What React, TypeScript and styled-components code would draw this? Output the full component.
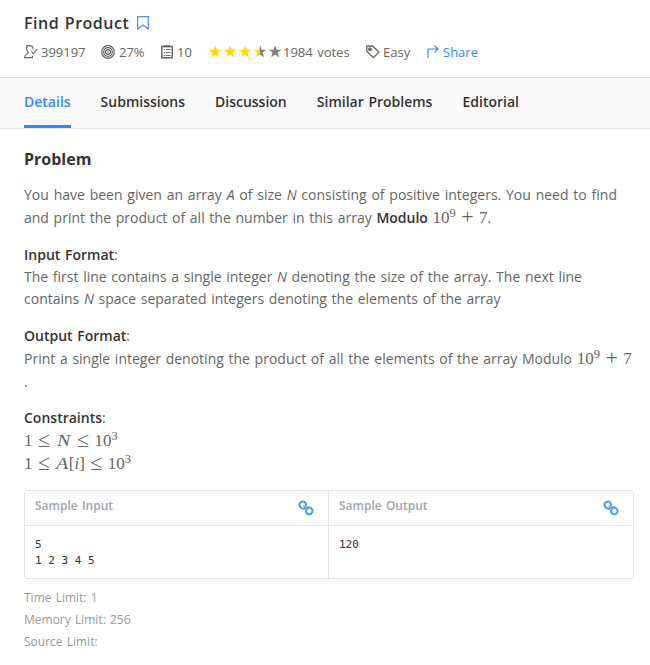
import React from "react";
import styled, { createGlobalStyle } from "styled-components";

const Global = createGlobalStyle`
  *, *::before, *::after { box-sizing: border-box; }
  html, body { margin: 0; background: #fff; overflow: hidden; }
  body { font-family: "Open Sans", "Noto Sans", sans-serif; font-size: 14px; color: #666; word-spacing: 1.04px; }
`;

const Page = styled.div`
  width: 650px;
  height: 665px;
  overflow: hidden;
`;

const Header = styled.header`
  height: 78px;
  padding: 12px 24px 0;
  border-bottom: 1px solid #dadfea;
`;

const TitleRow = styled.div`
  display: flex;
  align-items: center;
  height: 22px;
  gap: 8px;
`;

const Title = styled.h1`
  margin: 0;
  font-size: 16px;
  font-weight: 600;
  line-height: 22px;
  letter-spacing: 0.5px;
  color: #333;
`;

const Stats = styled.div`
  display: flex;
  align-items: center;
  height: 20px;
  margin-top: 8px;
  font-size: 13px;
  line-height: 20px;
`;

const Stat = styled.span<{ $width: number; $blue?: boolean; $gap?: number }>`
  display: flex;
  flex: none;
  align-items: center;
  gap: ${(p) => p.$gap ?? 3}px;
  width: ${(p) => p.$width}px;
  white-space: nowrap;
  color: ${(p) => (p.$blue ? "#3b82fc" : "#666")};
  svg { flex: none; }
`;

const Tabs = styled.nav`
  display: flex;
  gap: 30px;
  height: 51px;
  padding: 0 24px;
  background: #fafafa;
  border-bottom: 1px solid #dadfea;
`;

const Tab = styled.a<{ $active?: boolean }>`
  height: 50px;
  line-height: 48px;
  font-weight: 600;
  white-space: nowrap;
  color: ${(p) => (p.$active ? "#3b88fd" : "#333")};
  border-bottom: 3px solid ${(p) => (p.$active ? "#2f87ff" : "transparent")};
`;

const Main = styled.main`
  padding: 19px 16px 0 24px;
`;

const Heading = styled.h2`
  margin: 0 0 14px;
  font-size: 16px;
  font-weight: 700;
  line-height: 22px;
  color: #333;
`;

const Block = styled.section<{ $after: number }>`
  margin-bottom: ${(p) => p.$after}px;
`;

const Line = styled.div<{ $h?: number; $words?: number }>`
  height: ${(p) => p.$h ?? 22}px;
  line-height: 22px;
  white-space: nowrap;
  word-spacing: ${(p) => p.$words ?? 1.04}px;
`;

const Strong = styled.strong`
  font-weight: 600;
  color: #333;
`;

const MathText = styled.span`
  font-family: "Liberation Serif", serif;
  font-size: 17px;
  line-height: 1;
  sup {
    font-size: 12.5px;
    line-height: 0;
    vertical-align: 6px;
  }
`;

const Op = styled.span<{ $space: number }>`
  display: inline-block;
  margin: 0 ${(p) => p.$space}px;
  font-size: 22px;
  line-height: 10px;
  vertical-align: -1px;
`;

const Variable = styled.i<{ $stretch?: boolean; $left?: number; $right?: number }>`
  display: inline-block;
  line-height: 10px;
  transform: scaleX(${(p) => (p.$stretch ? 1.18 : 1)});
  margin: 0 ${(p) => p.$right ?? 0}px 0 ${(p) => p.$left ?? 0}px;
`;

const Samples = styled.div`
  display: grid;
  grid-template-columns: 303px 1fr;
  width: 610px;
  height: 89px;
  border: 1px solid #e3e4e6;
  border-radius: 3px;
`;

const Sample = styled.div`
  & + & { border-left: 1px solid #e3e4e6; }
`;

const SampleHead = styled.div`
  display: flex;
  justify-content: space-between;
  height: 35px;
  padding: 6px 14px 0 10px;
  border-bottom: 1px solid #e3e4e6;
  font-size: 12px;
  font-weight: 600;
  line-height: 18px;
  color: #a3a5a8;
  svg { margin-top: 3px; }
`;

const Code = styled.pre`
  margin: 0;
  padding: 11px 10px;
  font-family: "DejaVu Sans Mono", monospace;
  font-size: 11px;
  line-height: 16px;
  word-spacing: 0;
  color: #333;
`;

const Limits = styled.div`
  margin-top: 8px;
  font-size: 12px;
  line-height: 22px;
  color: #999;
`;

const STAR = "M7 0.2 8.7 5H13.8L9.7 8.1 11.2 13 7 10 2.8 13 4.3 8.1 0.2 5H5.3Z";

const Bookmark = () => (
  <svg width="12" height="14" viewBox="0 0 12 14" fill="none" stroke="#5a8dfb" strokeWidth="1.3">
    <path d="M.7.7H11.3V13L6 9 .7 13Z" />
  </svg>
);

const Submitted = () => (
  <svg width="14" height="14" viewBox="0 0 14 14" fill="none" stroke="#666" strokeWidth="1.2">
    <path d="M8.9 4.2C9.3 2 8 .7 6.2.7H2.2M3.6 1C2.2 2.2 2.3 4.3 3.4 5.8 4.6 7.6 4.4 8.6 2.6 9.2 1 9.8.6 10.8.6 12.7H8.4V10.8M7.3 6.3 9.3 8.7 13.3 4.2" />
  </svg>
);

const Target = () => (
  <svg width="14" height="14" viewBox="0 0 14 14" fill="none" stroke="#666" strokeWidth="1.25">
    <circle cx="7" cy="7" r="6.3" />
    <circle cx="7" cy="7" r="4.3" />
    <circle cx="7" cy="7" r="2.4" />
    <circle cx="7" cy="7" r=".8" fill="#666" stroke="none" />
  </svg>
);

const Clipboard = () => (
  <svg width="12" height="14" viewBox="0 0 12 14" fill="none" stroke="#666">
    <path strokeWidth="1.5" d="M.8 1.6H11.2V12.7H.8Z" />
    <path strokeWidth="2" d="M2.7 1.2H9.3" />
    <path d="M2.8 4.5H4M5 4.5H9.5M2.8 7.5H4M5 7.5H9.5M2.8 10.5H4M5 10.5H9.5" />
  </svg>
);

const Stars = () => (
  <svg width="74" height="14" viewBox="0 0 74 14">
    <defs>
      <linearGradient id="half">
        <stop offset=".5" stopColor="#ffd800" />
        <stop offset=".5" stopColor="#808080" />
      </linearGradient>
    </defs>
    {["#ffd800", "#ffd800", "#ffd800", "url(#half)", "#808080"].map((fill, i) => (
      <path key={i} d={STAR} fill={fill} transform={`translate(${i * 15 + 0.5} 0) scale(.94)`} />
    ))}
  </svg>
);

const Tag = () => (
  <svg width="14" height="14" viewBox="0 0 14 14" fill="none" stroke="#666" strokeWidth="1.3">
    <path d="M.8 1H6.6L13 7.2 7.4 12.7.8 6.3Z" />
    <circle cx="4" cy="4.3" r="1.3" fill="#888" />
  </svg>
);

const ShareIcon = () => (
  <svg width="12" height="14" viewBox="0 0 12 14" fill="none" stroke="#3b82fc" strokeWidth="1.2">
    <path d="M1 13V4H11M7.5.5 11 4 7.5 7.5" />
  </svg>
);

const Link = () => (
  <svg width="16" height="16" viewBox="0 0 16 16" fill="none" stroke="#4f9be3" strokeWidth="2">
    <path d="M7.4 8.1C5.9 9 3.6 8.7 2.4 7.2 1.1 5.5 1.3 3.5 2.7 2.3 4.2 1 6.5 1.4 7.5 3 8.2 4.1 8.1 5.3 7.3 6.6" />
    <path d="M8.5 8.5C10 7.2 12.2 7.2 13.6 8.8 14.8 10.2 14.7 12.3 13.3 13.6 11.8 14.8 9.6 14.4 8.5 12.9 7.8 11.9 7.8 10.6 8.5 9.4" />
    <path d="M5.6 6 9.8 10.2" strokeWidth="1.2" />
  </svg>
);

const Modulus = () => (
  <MathText>10<sup>9</sup><Op $space={5.4}>+</Op>7</MathText>
);

export default function App() {
  return (
    <Page>
      <Global />
      <Header>
        <TitleRow>
          <Title>Find Product</Title>
          <Bookmark />
        </TitleRow>
        <Stats>
          <Stat $width={77}><Submitted />399197</Stat>
          <Stat $width={60} $gap={4}><Target />27%</Stat>
          <Stat $width={47} $gap={4}><Clipboard />10</Stat>
          <Stat $width={158} $gap={1}><Stars />1984 votes</Stat>
          <Stat $width={61} $gap={3}><Tag />Easy</Stat>
          <Stat $width={60} $gap={4} $blue><ShareIcon />Share</Stat>
        </Stats>
      </Header>
      <Tabs>
        <Tab $active>Details</Tab>
        <Tab>Submissions</Tab>
        <Tab>Discussion</Tab>
        <Tab>Similar Problems</Tab>
        <Tab>Editorial</Tab>
      </Tabs>
      <Main>
        <Heading>Problem</Heading>
        <Block $after={15}>
          <Line $h={23} $words={1.16}>You have been given an array <i>A</i> of size <i>N</i> consisting of positive integers. You need to find</Line>
          <Line>and print the product of all the number in this array <Strong>Modulo</Strong> <Modulus />.</Line>
        </Block>
        <Block $after={15}>
          <Line><Strong>Input Format</Strong>:</Line>
          <Line>The first line contains a single integer <i>N</i> denoting the size of the array. The next line</Line>
          <Line>contains <i>N</i> space separated integers denoting the elements of the array</Line>
        </Block>
        <Block $after={14}>
          <Line $h={23}><Strong>Output Format</Strong>:</Line>
          <Line $h={23}>Print a single integer denoting the product of all the elements of the array Modulo <Modulus /></Line>
          <Line>.</Line>
        </Block>
        <Block $after={15}>
          <Line $h={23}><Strong>Constraints</Strong>:</Line>
          <Line $h={23}><MathText>1<Op $space={5.4}>≤</Op><Variable $stretch $left={2.5} $right={2.5}>N</Variable><Op $space={5.4}>≤</Op>10<sup>3</sup></MathText></Line>
          <Line><MathText>1<Op $space={5.4}>≤</Op><Variable $stretch $left={2} $right={1}>A</Variable>[<Variable>i</Variable>]<Op $space={5.4}>≤</Op>10<sup>3</sup></MathText></Line>
        </Block>
        <Samples>
          <Sample>
            <SampleHead>Sample Input<Link /></SampleHead>
            <Code>{"5\n1 2 3 4 5"}</Code>
          </Sample>
          <Sample>
            <SampleHead>Sample Output<Link /></SampleHead>
            <Code>120</Code>
          </Sample>
        </Samples>
        <Limits>
          <div>Time Limit: 1</div>
          <div>Memory Limit: 256</div>
          <div>Source Limit:</div>
        </Limits>
      </Main>
    </Page>
  );
}
